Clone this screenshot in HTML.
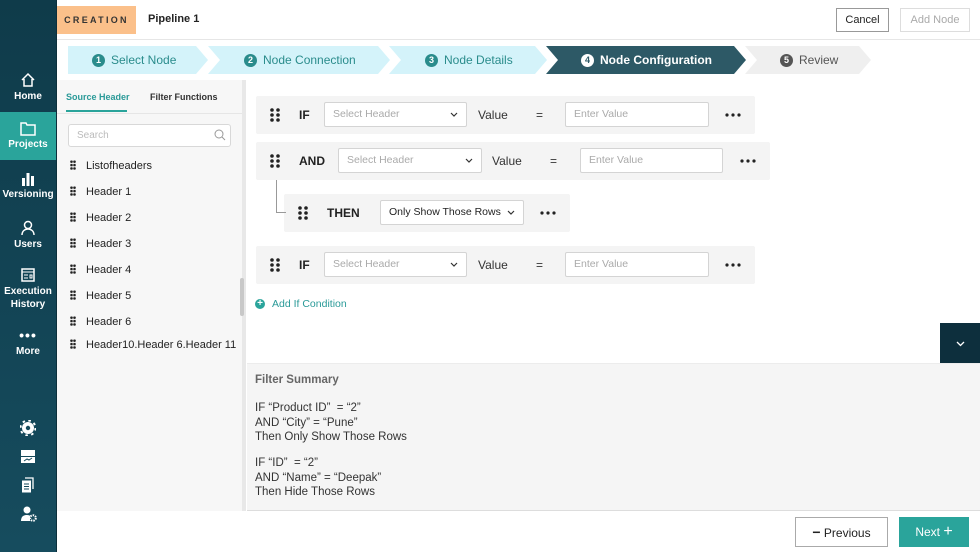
<!DOCTYPE html>
<html><head><meta charset="utf-8"><style>
*{box-sizing:border-box;margin:0;padding:0}
body{width:980px;height:552px;overflow:hidden;font-family:"Liberation Sans",sans-serif;background:#fff;position:relative;color:#222}
.abs{position:absolute}
.side{left:0;top:0;width:57px;height:552px;background:linear-gradient(#0f3b4a,#164c5e);border-right:1px solid #0c2f3b}
.nav{position:absolute;left:0;width:56px;text-align:center;color:#fff;font-size:10px;font-weight:bold}
.nav svg{display:block;margin:0 auto 3px}
.step{position:absolute;top:46px;height:28px;font-size:12px;line-height:28px;clip-path:polygon(0 0,calc(100% - 12px) 0,100% 50%,calc(100% - 12px) 100%,0 100%,12px 50%)}
.num{display:inline-block;width:13px;height:13px;border-radius:50%;font-size:9px;line-height:13px;text-align:center;color:#fff;font-weight:bold;margin-right:6px;vertical-align:1px}
.row{position:absolute;background:#f4f4f4;border-radius:2px}
.kw{position:absolute;font-size:12px;font-weight:bold}
.sel{position:absolute;background:#fff;border:1px solid #d4d4d4;border-radius:2px;height:25px;font-size:10.5px;color:#aaa;line-height:23px;padding-left:8px}
.sel svg{position:absolute;right:8px;top:9px}
.lbl{position:absolute;font-size:12px;color:#333}
.dots{position:absolute;width:16px;height:4px}
.li{position:absolute;left:70px;font-size:11px;color:#222}
.li b{display:inline-block;width:6px;height:10px;margin-right:10px;vertical-align:-1px;background:radial-gradient(circle,#222 1.2px,transparent 1.4px) 0 0/3px 3.4px}
</style></head><body>
<svg width="0" height="0" style="position:absolute"><defs>
<g id="gr"><circle cx="2" cy="2" r="1.8"/><circle cx="8" cy="2" r="1.8"/><circle cx="2" cy="7" r="1.8"/><circle cx="8" cy="7" r="1.8"/><circle cx="2" cy="12" r="1.8"/><circle cx="8" cy="12" r="1.8"/></g>
<g id="dt"><circle cx="2" cy="2" r="1.6"/><circle cx="8" cy="2" r="1.6"/><circle cx="14" cy="2" r="1.6"/></g>
<path id="cv" d="M1 1l3 3 3-3" fill="none" stroke="#333" stroke-width="1.2"/>
</defs></svg>
<div class="abs side"></div>
<div class="nav" style="top:72px"><svg width="16" height="16" viewBox="0 0 16 16"><path d="M2 8L8 2l6 6M4 7v7h8V7" fill="none" stroke="#fff" stroke-width="1.5"/></svg>Home</div>
<div class="abs" style="left:0;top:112px;width:56px;height:48px;background:#2aa49b"></div>
<div class="nav" style="top:122px"><svg width="16" height="14" viewBox="0 0 16 14"><path d="M1 1h5l1 2h8v10H1z" fill="none" stroke="#fff" stroke-width="1.5"/></svg>Projects</div>
<div class="nav" style="top:172px"><svg width="16" height="14" viewBox="0 0 16 14"><rect x="2" y="6" width="3" height="8" fill="#fff"/><rect x="6.5" y="1" width="3" height="13" fill="#fff"/><rect x="11" y="4" width="3" height="10" fill="#fff"/></svg>Versioning</div>
<div class="nav" style="top:220px"><svg width="14" height="16" viewBox="0 0 14 16"><circle cx="7" cy="5" r="3.5" fill="none" stroke="#fff" stroke-width="1.5"/><path d="M1 15c0-4 3-6 6-6s6 2 6 6" fill="none" stroke="#fff" stroke-width="1.5"/></svg>Users</div>
<div class="nav" style="top:268px;line-height:13px"><svg width="14" height="14" viewBox="0 0 14 14"><rect x="1" y="1" width="12" height="12" fill="none" stroke="#fff" stroke-width="1.5"/><path d="M1 4h12M3 7h4M3 10h4M9 7h2v3H9z" stroke="#fff" fill="none"/></svg>Execution<br>History</div>
<div class="nav" style="top:330px"><div style="font-size:14px;line-height:10px;letter-spacing:1px">•••</div><div style="margin-top:6px">More</div></div>
<svg class="abs" style="left:20px;top:420px" width="16" height="16" viewBox="0 0 16 16"><circle cx="8" cy="8" r="6" fill="#fff"/><circle cx="8" cy="8" r="7.5" fill="none" stroke="#fff" stroke-width="2" stroke-dasharray="2.5 3.4"/><circle cx="8" cy="8" r="2.2" fill="#164a5b"/></svg>
<svg class="abs" style="left:20px;top:449px" width="16" height="16" viewBox="0 0 16 16"><rect x="1" y="1" width="14" height="6" fill="#fff"/><rect x="1" y="8" width="14" height="6" fill="#fff"/><path d="M4 12l3-2 2 1 3-2" stroke="#164a5b" fill="none"/></svg>
<svg class="abs" style="left:21px;top:477px" width="14" height="16" viewBox="0 0 14 16"><path d="M4 1h8v11" fill="none" stroke="#fff" stroke-width="1.3"/><rect x="1" y="3.5" width="9" height="12" fill="#fff"/><path d="M3 7h5M3 9.5h5M3 12h5" stroke="#164a5b"/></svg>
<svg class="abs" style="left:21px;top:506px" width="16" height="16" viewBox="0 0 16 16"><circle cx="6" cy="4" r="3.5" fill="#fff"/><path d="M0 15c0-5 3-6 6-6 2 0 3 .5 3 1v5z" fill="#fff"/><circle cx="12" cy="12" r="2.8" fill="none" stroke="#fff" stroke-width="2" stroke-dasharray="1.5 1"/></svg>

<div class="abs" style="left:57px;top:6px;width:79px;height:28px;background:#fbc08a;font-size:9px;font-weight:bold;letter-spacing:2.3px;line-height:28px;text-align:center;color:#333">CREATION</div>
<div class="abs" style="left:148px;top:13px;font-size:11px;font-weight:bold">Pipeline 1</div>
<div class="abs" style="left:836px;top:8px;width:53px;height:24px;border:1px solid #999;font-size:11px;line-height:22px;text-align:center">Cancel</div>
<div class="abs" style="left:900px;top:8px;width:70px;height:24px;border:1px solid #ddd;font-size:11px;line-height:22px;text-align:center;color:#aaa">Add Node</div>
<div class="abs" style="left:57px;top:39px;width:923px;height:1px;background:#e6e6e6"></div>

<div class="step" style="left:68px;width:140px;background:#d4f3fa;color:#2a8c8c;clip-path:polygon(0 0,calc(100% - 12px) 0,100% 50%,calc(100% - 12px) 100%,0 100%);padding-left:24px"><span class="num" style="background:#2a8c8c">1</span>Select Node</div>
<div class="step" style="left:208px;width:182px;background:#d4f3fa;color:#2a8c8c;padding-left:36px"><span class="num" style="background:#2a8c8c">2</span>Node Connection</div>
<div class="step" style="left:389px;width:158px;background:#d4f3fa;color:#2a8c8c;padding-left:36px"><span class="num" style="background:#2a8c8c">3</span>Node Details</div>
<div class="step" style="left:546px;width:200px;background:#2d5966;color:#fff;font-weight:bold;padding-left:35px"><span class="num" style="background:#fff;color:#2d5966">4</span>Node Configuration</div>
<div class="step" style="left:745px;width:126px;background:#efefef;color:#555;padding-left:35px"><span class="num" style="background:#555">5</span>Review</div>

<div class="abs" style="left:57px;top:80px;width:189px;height:431px;background:#f7f7f7;border-right:4px solid #e8e8e8"></div>
<div class="abs" style="left:66px;top:92px;font-size:9px;font-weight:bold;color:#2a9a98">Source Header</div>
<div class="abs" style="left:66px;top:110px;width:61px;height:2px;background:#2aa49b"></div>
<div class="abs" style="left:150px;top:92px;font-size:9px;font-weight:bold;color:#333">Filter Functions</div>
<div class="abs" style="left:57px;top:113px;width:185px;height:1px;background:#e6e6e6"></div>
<div class="abs" style="left:68px;top:124px;width:163px;height:23px;border:1px solid #d8d8d8;border-radius:3px;background:#fff;font-size:10px;color:#bbb;line-height:21px;padding-left:8px">Search</div>
<svg class="abs" style="left:214px;top:129px" width="12" height="12" viewBox="0 0 12 12"><circle cx="5" cy="5" r="4" fill="none" stroke="#999"/><path d="M8 8l3 3" stroke="#999"/></svg>
<div class="li" style="top:160px"><b></b>Listofheaders</div>
<div class="li" style="top:186px"><b></b>Header 1</div>
<div class="li" style="top:212px"><b></b>Header 2</div>
<div class="li" style="top:238px"><b></b>Header 3</div>
<div class="li" style="top:264px"><b></b>Header 4</div>
<div class="li" style="top:290px"><b></b>Header 5</div>
<div class="li" style="top:316px"><b></b>Header 6</div>
<div class="li" style="top:339px"><b></b>Header10.Header 6.Header 11</div>
<div class="abs" style="left:240px;top:278px;width:4px;height:38px;background:#c8c8c8;border-radius:2px"></div>

<div class="row" style="left:256px;top:96px;width:499px;height:38px"></div>
<div class="row" style="left:256px;top:142px;width:514px;height:38px"></div>
<div class="row" style="left:284px;top:194px;width:286px;height:38px"></div>
<div class="row" style="left:256px;top:246px;width:499px;height:38px"></div>
<div class="abs" style="left:276px;top:180px;width:10px;height:33px;border-left:1px solid #999;border-bottom:1px solid #999"></div>

<svg class="abs" style="left:270px;top:108px" width="10" height="14"><use href="#gr" fill="#222"/></svg>
<svg class="abs" style="left:270px;top:154px" width="10" height="14"><use href="#gr" fill="#222"/></svg>
<svg class="abs" style="left:298px;top:206px" width="10" height="14"><use href="#gr" fill="#222"/></svg>
<svg class="abs" style="left:270px;top:258px" width="10" height="14"><use href="#gr" fill="#222"/></svg>

<div class="kw" style="left:299px;top:108px">IF</div>
<div class="sel" style="left:324px;top:102px;width:143px">Select Header<svg width="8" height="6"><use href="#cv"/></svg></div>
<div class="lbl" style="left:478px;top:108px">Value</div>
<div class="lbl" style="left:536px;top:108px">=</div>
<div class="sel" style="left:565px;top:102px;width:144px">Enter Value</div>
<svg class="dots" style="left:725px;top:113px"><use href="#dt" fill="#222"/></svg>

<div class="kw" style="left:299px;top:154px">AND</div>
<div class="sel" style="left:338px;top:148px;width:144px">Select Header<svg width="8" height="6"><use href="#cv"/></svg></div>
<div class="lbl" style="left:492px;top:154px">Value</div>
<div class="lbl" style="left:550px;top:154px">=</div>
<div class="sel" style="left:580px;top:148px;width:143px">Enter Value</div>
<svg class="dots" style="left:740px;top:159px"><use href="#dt" fill="#222"/></svg>

<div class="kw" style="left:327px;top:206px">THEN</div>
<div class="sel" style="left:380px;top:200px;width:144px;color:#222">Only Show Those Rows<svg width="8" height="6"><use href="#cv"/></svg></div>
<svg class="dots" style="left:540px;top:211px"><use href="#dt" fill="#222"/></svg>

<div class="kw" style="left:299px;top:258px">IF</div>
<div class="sel" style="left:324px;top:252px;width:143px">Select Header<svg width="8" height="6"><use href="#cv"/></svg></div>
<div class="lbl" style="left:478px;top:258px">Value</div>
<div class="lbl" style="left:536px;top:258px">=</div>
<div class="sel" style="left:565px;top:252px;width:144px">Enter Value</div>
<svg class="dots" style="left:725px;top:263px"><use href="#dt" fill="#222"/></svg>

<div class="abs" style="left:255px;top:299px;width:10px;height:10px;border-radius:50%;background:#2aa49b;color:#fff;font-size:10px;line-height:10px;text-align:center;font-weight:bold">+</div>
<div class="abs" style="left:272px;top:298px;font-size:10.5px;color:#2a9a98">Add If Condition</div>

<div class="abs" style="left:940px;top:323px;width:40px;height:40px;background:#0d2f3d"></div>
<svg class="abs" style="left:956px;top:341px" width="9" height="6"><path d="M1 1l3.5 3.5L8 1" fill="none" stroke="#fff" stroke-width="1.3"/></svg>

<div class="abs" style="left:247px;top:363px;width:733px;height:148px;background:#f5f5f5;border-top:1px solid #ececec;border-bottom:1px solid #ddd"></div>
<div class="abs" style="left:255px;top:374px;font-size:11.5px;font-weight:bold;color:#666">Filter Summary</div>
<div class="abs" style="left:255px;top:401px;font-size:11.5px;line-height:14.5px;color:#333">IF “Product ID”&nbsp; = “2”<br>AND “City” = “Pune”<br>Then Only Show Those Rows</div>
<div class="abs" style="left:255px;top:456px;font-size:11.5px;line-height:14.5px;color:#333">IF “ID”&nbsp; = “2”<br>AND “Name” = “Deepak”<br>Then Hide Those Rows</div>

<div class="abs" style="left:795px;top:517px;width:93px;height:30px;border:1px solid #aaa;font-size:12px;line-height:28px;text-align:center"><b style="font-size:14px">−</b> Previous</div>
<div class="abs" style="left:899px;top:517px;width:70px;height:30px;background:#2aa49b;color:#fff;font-size:12px;line-height:30px;text-align:center">Next <span style="font-size:16px">+</span></div>
</body></html>
